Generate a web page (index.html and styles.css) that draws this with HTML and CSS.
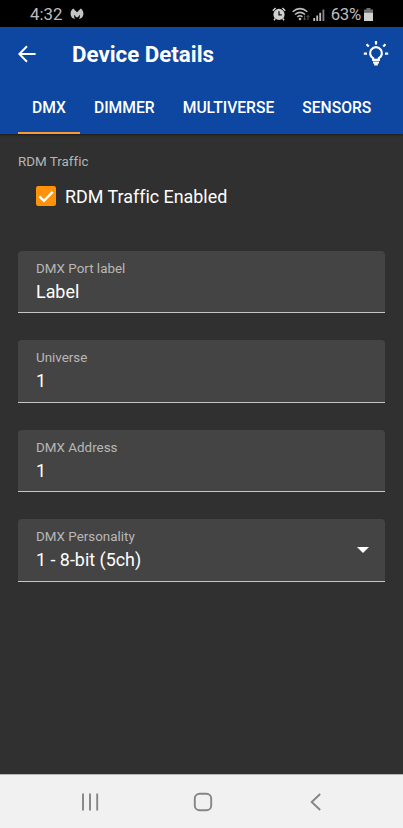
FILE: index.html
```html
<!DOCTYPE html>
<html lang="en">
<head>
<meta charset="utf-8">
<title>Device Details</title>
<link rel="stylesheet" href="styles.css">
</head>
<body>
<div class="status">
  <span class="clock">4:32</span>
  <svg class="mw" width="14" height="12" viewBox="0 0 14 12"><path d="M3.200.6 7 4.200 10.800.6C13.800 2.500 14.400 7.500 11.600 10L9 11Q10.300 8.500 9.700 6.800L7.900 9.200H6.100L4.300 6.800Q3.700 8.500 5 11L2.400 10C-.4 7.500.2 2.500 3.200.6Z" fill="#c4c4c4"/></svg>
  <div class="status-right">
    <svg width="14" height="14" viewBox="0 0 14 14"><path d="M.8 3.800 3.600 1M13.200 3.800 10.400 1M3.200 11.500 2 13.200M10.800 11.500 12 13.200" stroke="#d0d0d0" stroke-width="1.500"/><circle cx="7" cy="7.400" r="5.600" fill="#d0d0d0"/><path d="M7 4.300V7.800H9.800" fill="none" stroke="#111" stroke-width="1.300"/></svg>
    <svg class="wifi" width="18" height="14" viewBox="0 0 18 14"><g fill="none" stroke="#bdbdbd" stroke-width="1.500"><path d="M.6 4.800Q8 -1.600 15.400 4.800M3 7.500Q8 3.200 13 7.500M5.300 10Q8 7.700 10.500 9.900"/></g><circle cx="8" cy="12" r="1.300" fill="#bdbdbd"/><path d="M12.600 8.500V13M11.300 11.500 12.600 13 13.900 11.500M16 13V8.500M14.700 10 16 8.500 17.300 10" fill="none" stroke="#555"/></svg>
    <svg class="signal" width="12" height="12" viewBox="0 0 12 12"><path d="M.3 9h1.800v3H.3zM3.300 6.500h1.800V12H3.300zM6.300 3.700h1.800V12H6.300z" fill="#bdbdbd"/><path d="M9.500.5h1.800V12H9.500z" fill="#858585"/></svg>
    <span class="percent">63%</span>
    <svg class="battery" width="9" height="13" viewBox="0 0 9 13"><path d="M2.500 0h4v1.500H9V5H0V1.500h2.500z" fill="#707070"/><path d="M0 4.800h9V13H0z" fill="#d0d0d0"/></svg>
  </div>
</div>
<header>
  <div class="toolbar">
    <svg class="back" width="18" height="18" viewBox="0 0 18 18"><path d="M17.600 9H1.500M9 1.200 1.300 9 9 16.800" fill="none" stroke="#fff" stroke-width="2"/></svg>
    <h1>Device Details</h1>
    <svg class="bulb" width="26" height="26" viewBox="0 0 26 26"><g fill="none" stroke="#fff" stroke-width="2.200"><path d="M10.200 18.900V17.300A5.900 5.900 0 1 1 15.800 17.300V18.900Z"/><path d="M13 0V3.600M.8 12.600H4M22 12.600H25.200M3.500 3.200 5.800 5.500M22.500 3.200 20.200 5.500"/></g><path d="M10 20.600h6v2h-1.200v1.800h-3.600v-1.800H10z" fill="#fff"/></svg>
  </div>
  <nav class="tabs">
    <span class="tab active">DMX</span><span class="tab">DIMMER</span><span class="tab">MULTIVERSE</span><span class="tab">SENSORS</span>
  </nav>
</header>
<main>
  <div class="section">RDM Traffic</div>
  <div class="check">
    <svg width="20" height="20" viewBox="0 0 20 20"><rect width="20" height="20" rx="2.200" fill="#ff9209"/><path d="M3.300 10.400 7.900 14.900 16.700 5.900" fill="none" stroke="#fff" stroke-width="2.300"/></svg>
    <span>RDM Traffic Enabled</span>
  </div>
  <div class="fields">
    <div class="field"><label>DMX Port label</label><div class="value">Label</div></div>
    <div class="field"><label>Universe</label><div class="value">1</div></div>
    <div class="field"><label>DMX Address</label><div class="value">1</div></div>
    <div class="field select"><div><label>DMX Personality</label><div class="value">1 - 8-bit (5ch)</div></div>
      <svg width="12" height="6" viewBox="0 0 12 6"><path d="M0 0h12L6 6z" fill="#fff"/></svg></div>
  </div>
</main>
<footer>
  <svg width="18" height="18" viewBox="0 0 18 18"><path d="M2 .5v17M9 .5v17M16.200.5v17" stroke="#858585" stroke-width="1.900"/></svg>
  <svg width="20" height="20" viewBox="0 0 20 20"><rect x="1.800" y="1.800" width="16.400" height="16.400" rx="4.800" fill="none" stroke="#858585" stroke-width="1.900"/></svg>
  <svg width="18" height="18" viewBox="0 0 18 18"><path d="M13.200 1 4.700 9 13.200 17" fill="none" stroke="#858585" stroke-width="1.900"/></svg>
</footer>
</body>
</html>
```
FILE: styles.css
```css
* { box-sizing: border-box; }
body {
  margin: 0;
  height: 828px;
  display: flex;
  flex-direction: column;
  background: #303030;
  color: #fff;
  font-family: Roboto, sans-serif;
  font-variant-ligatures: none;
  overflow: hidden;
}
svg { display: block; flex: none; }
.status {
  height: 27px;
  flex: none;
  background: #000;
  color: #bdbdbd;
  display: flex;
  align-items: center;
  padding: 0 30px 0 30px;
  font-size: 16.8px;
}
.mw { margin-left: 8px; }
.status-right { margin-left: auto; display: flex; align-items: center; }
.wifi { margin-left: 6px; }
.signal { margin-left: 3px; margin-top: 2px; }
.percent { margin-left: 6px; letter-spacing: -0.3px; }
.battery { margin-left: 3px; margin-top: 1px; }
header {
  height: 107px;
  flex: none;
  background: #0d47a1;
  box-shadow: 0 1px 2px rgba(0, 0, 0, .45);
}
.toolbar {
  height: 54px;
  display: flex;
  align-items: center;
  padding: 0 14px 0 18px;
}
h1 {
  margin: 0 auto 0 36px;
  font-size: 22.3px;
  line-height: 26px;
  font-weight: 700;
}
.tabs { height: 53px; display: flex; padding-left: 18px; }
.tab {
  display: flex;
  align-items: center;
  padding: 2px 14px 0;
  border-bottom: 2px solid transparent;
  font-size: 15.67px;
  font-weight: 500;
}
.tab.active { border-color: #f99a32; }
main { flex: 1; padding: 18px 18px 0; }
.section { font-size: 13.4px; line-height: 18px; color: #b5b5b5; padding-top: 1px; }
.check {
  display: flex;
  align-items: center;
  gap: 9px;
  height: 24px;
  margin: 13px 0 0 18px;
  font-size: 17.9px;
}
.fields {
  display: flex;
  flex-direction: column;
  gap: 27px;
  margin-top: 42.6px;
}
.field {
  height: 62.5px;
  padding: 9.4px 16px 0 18px;
  background: #444;
  border-bottom: 1px solid #c5c5c5;
  border-radius: 4px 4px 0 0;
}
.field label { display: block; font-size: 13.4px; line-height: 18px; color: #b8b8b8; }
.value { font-size: 17.9px; line-height: 27px; }
.select { display: flex; justify-content: space-between; }
.select svg { margin-top: 19px; }
footer {
  height: 54px;
  flex: none;
  background: #f1f1f1;
  border-top: 1px solid #b5b5b5;
  display: flex;
  justify-content: space-between;
  align-items: center;
  padding: 0 78px 0 81px;
}
```
